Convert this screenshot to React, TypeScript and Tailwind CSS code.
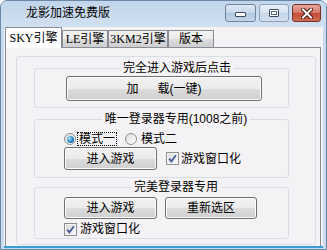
import type { ReactNode } from 'react'

const btnFace =
  'flex items-center justify-center rounded-[3px] border border-[#707070] bg-[linear-gradient(to_bottom,#f2f2f2_0%,#ebebeb_50%,#dddddd_50%,#cfcfcf_100%)] shadow-[inset_0_0_0_1px_#fcfcfc] leading-[14px]'

function Group({ title, className, children }: { title: string; className?: string; children: ReactNode }) {
  return (
    <fieldset className={`w-[255px] rounded-[3px] border border-[#d8dfe4] ${className ?? ''}`}>
      <legend className="mx-auto h-[14px] px-[3px] leading-[14px]">{title}</legend>
      {children}
    </fieldset>
  )
}

function Radio({ checked }: { checked?: boolean }) {
  return (
    <span className="flex h-[12px] w-[12px] items-center justify-center rounded-full border border-[#8e8f8f] bg-[linear-gradient(135deg,#dcdcdc,#ffffff)]">
      {checked && <span className="h-[7px] w-[7px] rounded-full bg-[radial-gradient(circle_at_35%_35%,#a6e6ff,#1572b8_65%,#0b4f87)]" />}
    </span>
  )
}

function Checkbox() {
  return (
    <span className="flex h-[13px] w-[13px] items-center justify-center border border-[#8e8f8f] bg-[linear-gradient(135deg,#dadada,#fbfbfb)] shadow-[inset_0_0_0_1px_#f4f4f4]">
      <svg width="9" height="9" viewBox="0 0 9 9">
        <path d="M1.2 4.6 L3.4 7.4 L7.9 1.2" stroke="#4a5f97" strokeWidth="1.8" fill="none" />
      </svg>
    </span>
  )
}

function Tab({ label, width, active }: { label: string; width: string; active?: boolean }) {
  return (
    <div
      className={`flex items-center justify-center border-x border-t border-[#898c95] font-['Liberation_Serif','Noto_Sans_CJK_SC',serif] leading-[14px] ${width} ${
        active
          ? 'relative z-10 -mb-[1px] h-[21px] bg-white'
          : 'h-[17px] bg-[linear-gradient(to_bottom,#f2f2f2_0%,#ebebeb_50%,#dddddd_50%,#cfcfcf_100%)]'
      }`}
    >
      {label}
    </div>
  )
}

export default function App() {
  return (
    <div className="flex h-[250px] w-[327px] flex-col overflow-hidden rounded-t-[7px] border border-[#6b87a8] bg-[#c9dbee] font-['Liberation_Sans','Noto_Sans_CJK_SC',sans-serif] text-[12px] text-black">
      <div className="flex h-[26px] shrink-0 items-start bg-[linear-gradient(to_bottom,#c2d5ea,#d0e0f1)]">
        <div className="pl-[25px] pt-[5px] leading-[14px]">龙影加速免费版</div>
        <div className="ml-auto mr-[5px] mt-[3px] flex gap-[3px]">
          <div className="flex h-[18px] w-[31px] items-start justify-center rounded-[3px] border border-[#6d84a0] bg-[linear-gradient(to_bottom,#dfe9f5_0%,#c5d6ea_50%,#b2c7df_50%,#c2d4e8_100%)]">
            <span className="mt-[7px] h-[5px] w-[11px] rounded-[1px] border border-[#3a4a60] bg-white" />
          </div>
          <div className="flex h-[18px] w-[30px] items-start justify-center rounded-[3px] border border-[#8ba0ba] bg-[linear-gradient(to_bottom,#e8eff8_0%,#d5e2f0_50%,#c6d6e9_50%,#d3e0ef_100%)]">
            <span className="mt-[4px] flex h-[8px] w-[10px] items-center justify-center rounded-[1px] border border-[#3a4a60] bg-white">
              <span className="h-[4px] w-[6px] border border-[#55657a]" />
            </span>
          </div>
          <div className="flex h-[18px] w-[29px] items-center justify-center rounded-[3px] border border-[#7a3128] bg-[linear-gradient(to_bottom,#e6a89c_0%,#d5786a_50%,#c24a38_50%,#d06d55_100%)]">
            <svg width="12" height="11" viewBox="0 0 12 11">
              <path d="M2 1.5 L10 9.5 M10 1.5 L2 9.5" stroke="#4a1a14" strokeWidth="4" strokeLinecap="square" />
              <path d="M2 1.5 L10 9.5 M10 1.5 L2 9.5" stroke="#ffffff" strokeWidth="2" strokeLinecap="square" />
            </svg>
          </div>
        </div>
      </div>

      <div className="mx-[3px] mb-[1px] flex flex-1 flex-col border-b-2 border-[#3d9bd3] bg-[#f5f2f5]">
        <div className="flex h-[20px] shrink-0 items-end pl-[1px]">
          <Tab label="SKY引擎" width="w-[57px]" active />
          <Tab label="LE引擎" width="w-[46px]" />
          <Tab label="3KM2引擎" width="w-[60px]" />
          <Tab label="版本" width="w-[46px]" />
        </div>

        <div className="ml-[1px] mr-[2px] flex-1 border-x border-t border-[#898c95] bg-[#f5f2f5] pl-[10px] pt-[8px]">
          <div className="h-[189px] w-[300px] rounded-[3px] border border-[#d8dfe4] pl-[17px] pt-[4px]">
            <Group title="完全进入游戏后点击" className="pb-[6px] pl-[31px] pt-[1px]">
              <button
                type="button"
                className={`${btnFace} h-[25px] w-[196px] border-[#3c7fb1] shadow-[inset_0_0_0_1px_#5fd3f7]`}
              >
                加<span className="inline-block w-[19px]" />载(一键)
              </button>
            </Group>

            <Group title="唯一登录器专用(1008之前)" className="mt-[4px] pb-[7px] pl-[29px] pt-[6px]">
              <div className="flex h-[14px] items-center leading-[12px]">
                <Radio checked />
                <span className="ml-[1px] border border-dotted border-black px-[1px]">模式一</span>
                <span className="ml-[8px]">
                  <Radio />
                </span>
                <span className="ml-[2px] border border-transparent px-[1px]">模式二</span>
              </div>
              <div className="mt-[1px] flex items-center">
                <button type="button" className={`${btnFace} h-[23px] w-[93px]`}>
                  进入游戏
                </button>
                <span className="ml-[9px]">
                  <Checkbox />
                </span>
                <span className="ml-[2px] leading-[14px]">游戏窗口化</span>
              </div>
            </Group>

            <Group title="完美登录器专用" className="mt-[2px] pb-[2px] pl-[29px] pt-[3px]">
              <div className="flex">
                <button type="button" className={`${btnFace} h-[22px] w-[93px]`}>
                  进入游戏
                </button>
                <button type="button" className={`${btnFace} ml-[8px] h-[22px] w-[92px]`}>
                  重新选区
                </button>
              </div>
              <div className="mt-[4px] flex h-[13px] items-center">
                <Checkbox />
                <span className="ml-[3px] leading-[13px]">游戏窗口化</span>
              </div>
            </Group>
          </div>
        </div>
      </div>
    </div>
  )
}
